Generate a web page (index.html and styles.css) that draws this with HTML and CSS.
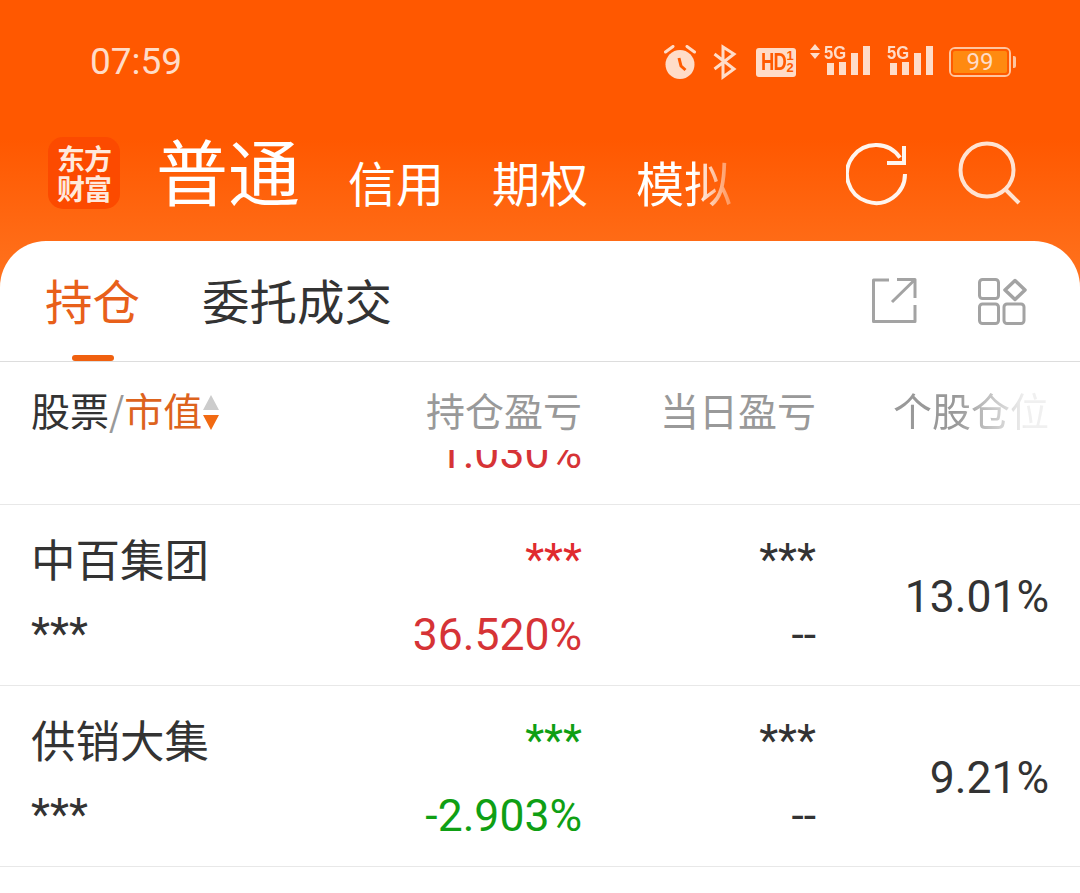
FILE: index.html
```html
<!DOCTYPE html>
<html lang="zh-CN">
<head>
    <meta charset="UTF-8">
    <meta name="viewport" content="width=device-width, initial-scale=1.0">
    <title>持仓</title>
    <link rel="stylesheet" href="styles.css">
</head>
<body>
    <div class="screen">
        <header class="top">
            <div class="status-bar">
                <span class="clock">07:59</span>
                <div class="status-icons">
                    <!-- alarm -->
                    <svg class="alarm" width="32" height="34" viewBox="0 0 32 34">
                        <circle cx="16" cy="19.500" r="14.500" fill="#ffdcc8"/>
                        <path d="M1.500 7 L9 1.500 M30.500 7 L23 1.500" stroke="#ffdcc8" stroke-width="3" stroke-linecap="round"/>
                        <path d="M15 13 L17 21 L21.500 25" fill="none" stroke="#ff5a00" stroke-width="3"/>
                    </svg>
                    <!-- bluetooth -->
                    <svg class="bluetooth" width="24" height="36" viewBox="0 0 24 36">
                        <path d="M1.500 10 L21 25 L10 33 L10 3 L21 10 L1.500 25" fill="none" stroke="#ffdcc8" stroke-width="3"/>
                    </svg>
                    <div class="hd-badge"><span class="hd-text">HD</span><span class="hd-frac"><i>1</i><i>2</i></span></div>
                    <div class="signal signal-updown">
                        <svg class="arrows" width="10" height="15" viewBox="0 0 10 15">
                            <path d="M5 0 L10 6 L0 6 Z M0 9 L10 9 L5 15 Z" fill="#ffdcc8"/>
                        </svg>
                        <span class="net">5G</span>
                        <span class="bar bar-1"></span><span class="bar bar-2"></span><span class="bar bar-3"></span><span class="bar bar-4"></span>
                    </div>
                    <div class="signal">
                        <span class="net">5G</span>
                        <span class="bar bar-1"></span><span class="bar bar-2"></span><span class="bar bar-3"></span><span class="bar bar-4"></span>
                    </div>
                    <div class="battery"><div class="battery-body">99</div><span class="battery-cap"></span></div>
                </div>
            </div>
            <nav class="account-nav">
                <div class="logo">东方<br>财富</div>
                <span class="nav-main">普通</span>
                <div class="nav-links">
                    <span>信用</span>
                    <span>期权</span>
                    <span class="fade-end">模拟</span>
                </div>
                <svg class="nav-icon refresh" width="66" height="66" viewBox="0 0 66 66">
                    <path d="M59 33 A29 29 0 1 1 54 16.700" fill="none" stroke="#fff5ee" stroke-width="4"/>
                    <path d="M58 5 L58 22 L41 22" fill="none" stroke="#fff5ee" stroke-width="4"/>
                </svg>
                <svg class="nav-icon search" width="66" height="66" viewBox="0 0 66 66">
                    <circle cx="30" cy="30" r="26.500" fill="none" stroke="#ffe3d2" stroke-width="4"/>
                    <path d="M48 49 L62 63" stroke="#ffe3d2" stroke-width="4"/>
                </svg>
            </nav>
        </header>

        <main class="card">
            <div class="tabs">
                <span class="tab tab-active">持仓</span>
                <span class="tab">委托成交</span>
                <div class="tab-tools">
                    <svg width="48" height="48" viewBox="0 0 48 48">
                        <path d="M19 4 L3.500 4 L3.500 45.500 L45 45.500 L45 29 M27 3.500 L45 3.500 L45 22 M45 3.500 L22 26" fill="none" stroke="#a3a3a3" stroke-width="3" stroke-linejoin="round"/>
                    </svg>
                    <svg class="grid-icon" width="50" height="48" viewBox="0 0 50 48">
                        <rect x="1.500" y="1.500" width="19" height="19" rx="3" fill="none" stroke="#a3a3a3" stroke-width="3"/>
                        <rect x="1.500" y="26" width="19" height="19.500" rx="3" fill="none" stroke="#a3a3a3" stroke-width="3"/>
                        <rect x="26" y="26" width="20" height="19.500" rx="3" fill="none" stroke="#a3a3a3" stroke-width="3"/>
                        <path d="M37 2.500 L47 12 L37 21.500 L27 12 Z" fill="none" stroke="#a3a3a3" stroke-width="3.500" stroke-linejoin="round"/>
                    </svg>
                </div>
            </div>

            <div class="list-head">
                <div class="col-name">
                    <span>股票</span><span class="slash">/</span><span class="sorted">市值</span>
                    <span class="sort-arrows"></span>
                </div>
                <div class="col col-hold">持仓盈亏</div>
                <div class="col col-day">当日盈亏</div>
                <div class="col col-pos fade-end-strong">个股仓位</div>
            </div>

            <div class="list">
                <div class="row row-cut">
                    <div class="col-name"></div>
                    <div class="col col-hold"><div class="num red">1.030%</div></div>
                </div>
                <div class="row">
                    <div class="col-name">
                        <div class="stock">中百集团</div>
                        <div class="num masked">***</div>
                    </div>
                    <div class="col col-hold">
                        <div class="num bright-red">***</div>
                        <div class="num line2 red">36.520%</div>
                    </div>
                    <div class="col col-day">
                        <div class="num">***</div>
                        <div class="num line2">--</div>
                    </div>
                    <div class="col col-pos num percent">13.01%</div>
                </div>
                <div class="row">
                    <div class="col-name">
                        <div class="stock">供销大集</div>
                        <div class="num masked">***</div>
                    </div>
                    <div class="col col-hold">
                        <div class="num green">***</div>
                        <div class="num line2 green">-2.903%</div>
                    </div>
                    <div class="col col-day">
                        <div class="num">***</div>
                        <div class="num line2">--</div>
                    </div>
                    <div class="col col-pos num percent">9.21%</div>
                </div>
            </div>
        </main>
    </div>
</body>
</html>
```

FILE: styles.css
```css
* {
    box-sizing: border-box;
}
html, body {
    margin: 0;
    padding: 0;
}
body {
    font-family: "Noto Sans CJK SC", "Noto Sans", sans-serif;
    background-color: white;
}
.screen {
    width: 1080px;
    height: 893px;
    overflow: hidden;
    background: linear-gradient(180deg, #ff5800 0%, #ff5800 48%, #ff7420 100%) top / 100% 290px no-repeat;
}
.top {
    height: 241px;
    color: white;
}
.status-bar {
    height: 120px;
    padding: 40px 64px 0 90px;
    display: flex;
    justify-content: space-between;
}
.clock {
    font-family: Roboto, sans-serif;
    font-size: 37px;
    line-height: 44px;
    color: #ffdcc8;
}
.status-icons {
    display: flex;
    align-items: center;
    height: 44px;
}
.alarm {
    margin-right: 17px;
}
.bluetooth {
    margin-right: 19px;
}
.hd-badge {
    width: 40px;
    height: 29px;
    background-color: #ffdcc8;
    border-radius: 3px;
    color: #ff5a00;
    display: flex;
    align-items: center;
    justify-content: center;
    font-family: "Liberation Sans", sans-serif;
    font-weight: bold;
    margin-right: 14px;
}
.hd-text {
    font-size: 23px;
    letter-spacing: -1px;
    transform: scaleX(0.8);
    margin-right: -3px;
}
.hd-frac {
    display: flex;
    flex-direction: column;
    font-size: 13px;
    line-height: 12px;
}
.hd-frac i {
    font-style: normal;
}
.signal {
    position: relative;
    width: 46px;
    height: 29px;
    padding-left: 3px;
    display: flex;
    align-items: flex-end;
    gap: 5px;
    margin-bottom: 3px;
}
.signal-updown {
    width: 60px;
    padding-left: 17px;
    margin-right: 17px;
}
.signal-updown .net {
    left: 14px;
}
.arrows {
    position: absolute;
    left: 0;
    top: -2px;
}
.net {
    position: absolute;
    left: 0;
    top: -2px;
    font-family: "Liberation Sans", sans-serif;
    font-weight: bold;
    font-size: 18px;
    line-height: 18px;
    color: #ffdcc8;
    transform: scaleX(0.92);
    transform-origin: left;
}
.bar {
    width: 7px;
    background-color: #ffdcc8;
    display: block;
}
.bar-1 { height: 12px; }
.bar-2 { height: 13px; }
.bar-3 { height: 22px; }
.bar-4 { height: 29px; }
.battery {
    display: flex;
    align-items: center;
    margin-left: 16px;
}
.battery-body {
    width: 62px;
    height: 30px;
    border: 2px solid #ffc5a0;
    outline: 2px solid #ff5a00;
    outline-offset: -4px;
    border-radius: 6px;
    background-color: #ff8a10;
    color: #ffdcc8;
    font-family: Roboto, sans-serif;
    font-size: 24px;
    line-height: 26px;
    text-align: center;
}
.battery-cap {
    width: 3px;
    height: 12px;
    margin-left: 2px;
    background-color: #ffc5a0;
    border-radius: 0 2px 2px 0;
}
.account-nav {
    display: flex;
    align-items: flex-start;
    padding-left: 48px;
    position: relative;
}
.logo {
    width: 72px;
    height: 72px;
    margin-top: 17px;
    border-radius: 15px;
    background-color: #fc4a00;
    color: #ffe9dc;
    font-size: 28px;
    font-weight: 700;
    line-height: 30px;
    text-align: center;
    padding-top: 6px;
    letter-spacing: -1px;
}
.nav-main {
    margin-left: 36px;
    font-size: 72px;
    line-height: 100px;
    margin-top: -1px;
    font-weight: 400;
}
.nav-links {
    display: flex;
    gap: 48px;
    margin-left: 48px;
    margin-top: 23px;
    font-size: 48px;
    line-height: 76px;
}
.fade-end {
    -webkit-mask-image: linear-gradient(90deg, #000 60%, rgba(0, 0, 0, 0.3) 100%);
    mask-image: linear-gradient(90deg, #000 60%, rgba(0, 0, 0, 0.3) 100%);
}
.fade-end-strong {
    -webkit-mask-image: linear-gradient(90deg, #000 60%, rgba(0, 0, 0, 0.15) 90%);
    mask-image: linear-gradient(90deg, #000 60%, rgba(0, 0, 0, 0.15) 90%);
}
.nav-icon {
    position: absolute;
    top: 21px;
}
.refresh {
    left: 846px;
}
.search {
    left: 957px;
    top: 20px;
}
.card {
    height: 652px;
    background-color: white;
    border-radius: 46px 46px 0 0;
}
.tabs {
    height: 121px;
    border-bottom: 1px solid #dddddd;
    display: flex;
    align-items: flex-start;
    padding: 24px 52px 0 45px;
    font-size: 47.500px;
    line-height: 70px;
    color: #333333;
}
.tab {
    margin-right: 62px;
}
.tab-active {
    color: #e8601a;
    position: relative;
}
.tab-active::after {
    content: "";
    position: absolute;
    left: 27px;
    bottom: -26px;
    width: 42px;
    height: 6px;
    border-radius: 3px;
    background-color: #f0600f;
}
.tab-tools {
    margin-left: auto;
    display: flex;
    gap: 60px;
    margin-top: 11px;
}
.grid-icon {
    margin-top: 2px;
}
.list-head, .row {
    display: flex;
    padding: 0 31px;
}
.list-head {
    height: 88px;
    padding-top: 19px;
    font-size: 39px;
    line-height: 56px;
    color: #999999;
}
.col-name {
    width: 240px;
    color: #333333;
}
.col {
    text-align: right;
    position: relative;
}
.col-hold {
    width: 311px;
}
.col-day {
    width: 234px;
}
.col-pos {
    width: 233px;
}
.list-head .col-name {
    display: flex;
}
.slash {
    color: #999999;
}
.sorted {
    color: #dd631d;
}
.sort-arrows {
    width: 17px;
    height: 36px;
    margin: 14px 0 0 1px;
    position: relative;
}
.sort-arrows::before, .sort-arrows::after {
    content: "";
    position: absolute;
    left: 0;
    border-left: 8.500px solid transparent;
    border-right: 8.500px solid transparent;
}
.sort-arrows::before {
    top: 0;
    border-bottom: 15px solid #cccccc;
}
.sort-arrows::after {
    top: 20px;
    border-top: 15px solid #f26a12;
}
.list {
    height: 443px;
    overflow: hidden;
}
.row {
    height: 181px;
    border-bottom: 1px solid #e8e8e8;
    padding-top: 33px;
}
.row-cut {
    height: 55px;
    padding-top: 0;
    overflow: hidden;
}
.row-cut .col-hold {
    margin-top: -19px;
}
.row .col-name {
    margin-top: -8px;
}
.stock {
    font-size: 44.500px;
    line-height: 56px;
    color: #333333;
}
.num {
    font-family: Roboto, sans-serif;
    font-size: 44px;
    line-height: 44px;
    color: #333333;
}
.line2, .percent, .row-cut .num {
    font-size: 44.500px;
}
.masked {
    margin-top: 26px;
}
.line2 {
    margin-top: 31px;
}
.percent {
    margin-top: 37px;
}
.red {
    color: #d63336;
}
.bright-red {
    color: #e02a2e;
}
.green {
    color: #0f9f14;
}
```
